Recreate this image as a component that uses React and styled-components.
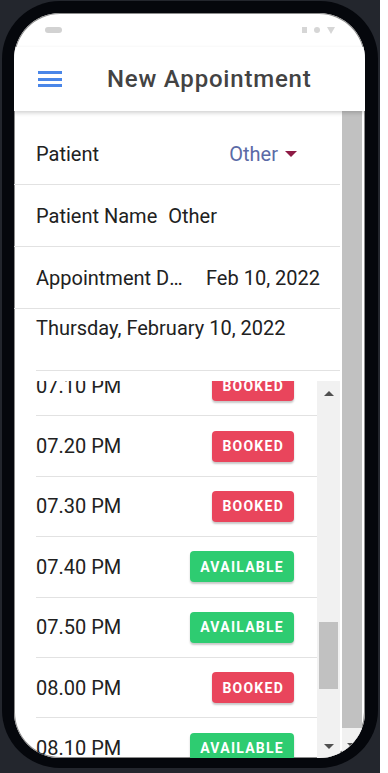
import React from "react";
import styled, { createGlobalStyle, css } from "styled-components";

const GlobalStyle = createGlobalStyle`
  * { box-sizing: border-box; }
  html, body { margin: 0; padding: 0; background: #ffffff; }
  body { font-family: "Roboto", "Liberation Sans", sans-serif; }
`;

const slots = [
  { time: "07.10 PM", status: "booked" },
  { time: "07.20 PM", status: "booked" },
  { time: "07.30 PM", status: "booked" },
  { time: "07.40 PM", status: "available" },
  { time: "07.50 PM", status: "available" },
  { time: "08.00 PM", status: "booked" },
  { time: "08.10 PM", status: "available" },
  { time: "08.20 PM", status: "booked" }
];

const App = () => {
  return (
    <>
      <GlobalStyle />
      <Page>
        <Phone>
          <Screen>
            <StatusBar>
              <Pill />
              <StatusIcons>
                <SquareIcon />
                <DotIcon />
                <WifiIcon />
              </StatusIcons>
            </StatusBar>
            <AppBar>
              <Hamburger>
                <span />
                <span />
                <span />
              </Hamburger>
              <Title>New Appointment</Title>
            </AppBar>
            <Body>
              <Content>
                <FieldRow>
                  <Label>Patient</Label>
                  <Picker>
                    Other
                    <Caret />
                  </Picker>
                </FieldRow>
                <FieldRow>
                  <Label>Patient Name</Label>
                  <Value gap={11}>Other</Value>
                </FieldRow>
                <FieldRow>
                  <Label truncate>Appointment Date</Label>
                  <Value gap={22}>Feb 10, 2022</Value>
                </FieldRow>
                <DayHeading>Thursday, February 10, 2022</DayHeading>
                <ListArea>
                  <ListInner>
                    <ListViewport>
                      <Slots offset={25}>
                        {slots.map(slot => (
                          <SlotRow key={slot.time}>
                            <SlotTime>{slot.time}</SlotTime>
                            <Badge status={slot.status}>
                              {slot.status === "booked" ? "BOOKED" : "AVAILABLE"}
                            </Badge>
                          </SlotRow>
                        ))}
                      </Slots>
                    </ListViewport>
                    <ScrollTrack width={23}>
                      <ArrowBox>
                        <Arrow up />
                      </ArrowBox>
                      <Thumb top={217} height={67} inset={2} />
                      <Filler />
                      <ArrowBox>
                        <Arrow />
                      </ArrowBox>
                    </ScrollTrack>
                  </ListInner>
                </ListArea>
              </Content>
              <ScrollTrack width={20}>
                <Thumb top={0} height={617} inset={0} />
                <Filler />
                <ArrowBox tall>
                  <Arrow />
                </ArrowBox>
              </ScrollTrack>
            </Body>
          </Screen>
        </Phone>
      </Page>
    </>
  );
};

const Page = styled.div`
  width: 380px;
  height: 773px;
  background: #23262d;
  padding: 1px 0 0 2px;
`;

const Phone = styled.div`
  width: 376px;
  height: 767px;
  background: #05070c;
  border-radius: 58px;
  padding: 12px 13px 10px 12px;
`;

const Screen = styled.div`
  width: 100%;
  height: 100%;
  background: #ffffff;
  border-radius: 46px;
  overflow: hidden;
  display: flex;
  flex-direction: column;
  box-shadow: inset 0 0 0 1px #8c8c8c;
`;

const StatusBar = styled.div`
  height: 34px;
  flex-shrink: 0;
  display: flex;
  align-items: center;
  justify-content: space-between;
  padding: 0 30px 0 31px;
`;

const Pill = styled.div`
  width: 17px;
  height: 6px;
  border-radius: 3px;
  background: #d2d2d2;
`;

const StatusIcons = styled.div`
  display: flex;
  align-items: center;
  gap: 7px;
`;

const SquareIcon = styled.div`
  width: 5px;
  height: 6px;
  background: #d6d6d6;
`;

const DotIcon = styled.div`
  width: 6px;
  height: 6px;
  border-radius: 50%;
  background: #d6d6d6;
`;

const WifiIcon = styled.div`
  width: 0;
  height: 0;
  border-left: 4px solid transparent;
  border-right: 4px solid transparent;
  border-top: 7px solid #d6d6d6;
`;

const AppBar = styled.div`
  height: 64px;
  flex-shrink: 0;
  display: flex;
  align-items: center;
  padding-left: 24px;
  background: #ffffff;
  position: relative;
  z-index: 2;
  box-shadow: 0 2px 4px rgba(0, 0, 0, 0.18);
`;

const Hamburger = styled.div`
  width: 24px;
  display: flex;
  flex-direction: column;
  gap: 3.5px;

  span {
    display: block;
    height: 3px;
    background: #4a86e8;
  }
`;

const Title = styled.div`
  margin-left: 45px;
  font-size: 24px;
  font-weight: 500;
  color: #434343;
  letter-spacing: 0.8px;
`;

const Body = styled.div`
  flex: 1;
  min-height: 0;
  display: flex;
  padding-right: 3px;
`;

const Content = styled.div`
  flex: 1;
  min-width: 0;
  display: flex;
  flex-direction: column;
  padding: 12px 2px 0 0;
  overflow: hidden;
`;

const FieldRow = styled.div`
  height: 62px;
  flex-shrink: 0;
  display: flex;
  align-items: center;
  padding-left: 22px;
  border-bottom: 1px solid #e2e2e2;
`;

const Label = styled.div`
  font-size: 20px;
  color: #212121;
  white-space: nowrap;

  ${props =>
    props.truncate &&
    css`
      width: 148px;
      overflow: hidden;
      text-overflow: ellipsis;
    `}
`;

const Value = styled.div`
  margin-left: ${props => props.gap}px;
  font-size: 20px;
  color: #212121;
  white-space: nowrap;
`;

const Picker = styled.div`
  margin-left: auto;
  margin-right: 43px;
  display: flex;
  align-items: center;
  gap: 7px;
  font-size: 20px;
  color: #5b6aa6;
`;

const Caret = styled.span`
  width: 0;
  height: 0;
  border-left: 6px solid transparent;
  border-right: 6px solid transparent;
  border-top: 6px solid #8e1b45;
  margin-top: 1px;
`;

const DayHeading = styled.div`
  height: 61px;
  flex-shrink: 0;
  padding: 7px 0 0 22px;
  font-size: 20px;
  line-height: 24px;
  color: #212121;
`;

const ListArea = styled.div`
  flex: 1;
  min-height: 0;
  margin-left: 22px;
  border-top: 1px solid #e2e2e2;
  padding-top: 10px;
  display: flex;
  flex-direction: column;
`;

const ListInner = styled.div`
  flex: 1;
  min-height: 0;
  display: flex;
`;

const ListViewport = styled.div`
  flex: 1;
  min-width: 0;
  overflow: hidden;
`;

const Slots = styled.div`
  margin-top: -${props => props.offset}px;
`;

const SlotRow = styled.div`
  height: 60.4px;
  display: flex;
  align-items: center;
  justify-content: space-between;
  padding-right: 23px;
  border-bottom: 1px solid #e2e2e2;
`;

const SlotTime = styled.div`
  font-size: 20px;
  color: #212121;
`;

const Badge = styled.div`
  height: 31px;
  padding: 0 10px;
  display: flex;
  align-items: center;
  border-radius: 4px;
  font-size: 14px;
  font-weight: 700;
  letter-spacing: 1.25px;
  color: #ffffff;
  background: ${props => (props.status === "booked" ? "#e9455c" : "#2ecc71")};
  box-shadow: 0 2px 2px rgba(0, 0, 0, 0.22);
`;

const ScrollTrack = styled.div`
  width: ${props => props.width}px;
  flex-shrink: 0;
  background: #f1f1f1;
  display: flex;
  flex-direction: column;
`;

const Thumb = styled.div`
  flex-shrink: 0;
  margin: ${props => props.top}px ${props => props.inset}px 0;
  height: ${props => props.height}px;
  background: #c1c1c1;
`;

const Filler = styled.div`
  flex: 1;
`;

const ArrowBox = styled.div`
  height: ${props => (props.tall ? 26 : 24)}px;
  flex-shrink: 0;
  display: flex;
  align-items: center;
  justify-content: center;
`;

const Arrow = styled.span`
  width: 0;
  height: 0;
  border-left: 5px solid transparent;
  border-right: 5px solid transparent;
  ${props =>
    props.up
      ? css`
          border-bottom: 5px solid #505050;
        `
      : css`
          border-top: 5px solid #505050;
        `}
`;

export default App;
